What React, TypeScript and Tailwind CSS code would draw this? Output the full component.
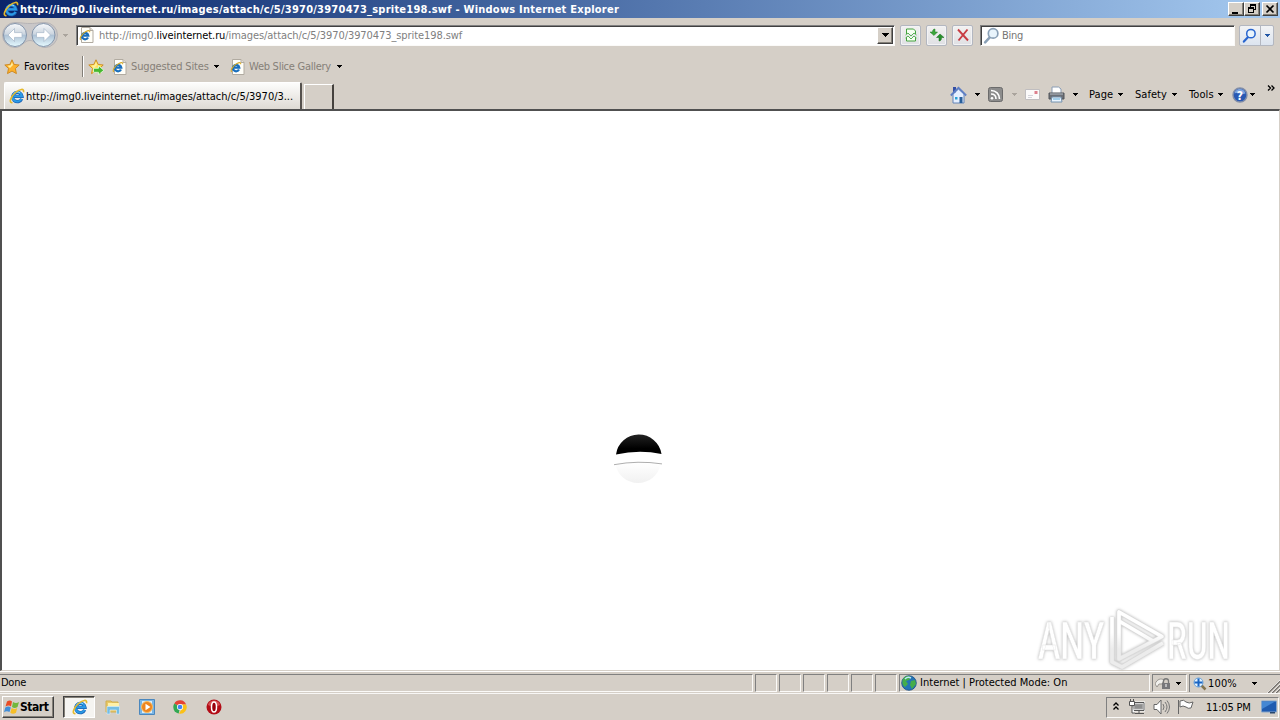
import type { ReactNode } from "react";

type IconProps = { className?: string };

function IeLogo({ className = "w-4 h-4" }: IconProps) {
  return (
    <svg viewBox="0 0 16 16" className={`shrink-0 ${className}`}>
      <path d="M12.700 10.800A4.700 4.700 0 1 1 13 8.300H5" fill="none" stroke="#1c62b4" strokeWidth="3.200" />
      <path d="M12.500 10.800A4.700 4.700 0 1 1 12.900 8.300H5" fill="none" stroke="#2b9be6" strokeWidth="2" />
      <path d="M4.500 6.200C5.500 4 8.500 3.200 11 4.800" fill="none" stroke="#8bdcff" strokeWidth="1" />
      <path
        d="M3.500 14.500C-.7 15.500 1.500 8.800 6.500 4.500 10.800.9 15.500 0 14.500 4.200"
        fill="none"
        stroke="#e5b92b"
        strokeWidth="1.600"
      />
    </svg>
  );
}

function IePage() {
  return (
    <svg viewBox="0 0 16 16" className="w-4 h-4 shrink-0">
      <path d="M2.500.5h8.500l3 3v12H2.500z" fill="#fffef8" stroke="#b1aba1" />
      <path d="M11 .5v3h3" fill="#e3dfd5" stroke="#b1aba1" />
      <path d="M9 10.500A3.200 3.200 0 1 1 9.300 8.600H4" fill="none" stroke="#1a6fbd" strokeWidth="2.200" />
      <path d="M1.800 12.800C-.2 12 3 6.500 7 4.500c2-1 4-1.500 3.700.8" fill="none" stroke="#d7aa25" strokeWidth="1.100" />
    </svg>
  );
}

function Star({ add }: { add?: boolean }) {
  return (
    <svg viewBox="0 0 16 16" className="w-4 h-4 shrink-0">
      <path
        d="m8 .8 2.100 4.600 5.100.6-3.800 3.500 1 5.100L8 12.100l-4.500 2.500 1-5.100L.8 6l5.100-.6z"
        fill={add ? "#ffe45c" : "#fdb12c"}
        stroke="#cc8418"
        strokeWidth=".9"
      />
      <path d="m8 3-1.300 3.300-3.200.4L6 9l3-3z" fill="#fff0a0" />
      {add && (
        <path d="M5.500 9.300h5V6.800l5.300 4.500-5.300 4.500v-2.500h-5z" fill="#46b830" stroke="#e9ffe0" strokeWidth=".8" />
      )}
    </svg>
  );
}

function Caret({ className = "text-black" }: IconProps) {
  return (
    <svg viewBox="0 0 5 3" shapeRendering="crispEdges" className={`w-[5px] h-[3px] shrink-0 ${className}`}>
      <path d="M0 0h5v1H0zM1 1h3v1H1zM2 2h1v1H2z" fill="currentColor" />
    </svg>
  );
}

function NavButtons() {
  return (
    <svg viewBox="0 0 58 28" className="w-[58px] h-7 shrink-0">
      <defs>
        <linearGradient id="nav" x2="0" y2="1">
          <stop offset="0" stopColor="#f7f9fb" />
          <stop offset=".45" stopColor="#cdd6e0" />
          <stop offset=".52" stopColor="#afc3d6" />
          <stop offset="1" stopColor="#e6faff" />
        </linearGradient>
      </defs>
      <path d="M14 1.500c6 0 8 1 15 1s9-1 15-1a12.500 12.500 0 0 1 0 25c-7 0-9-7-15-7s-8 7-15 7a12.500 12.500 0 0 1 0-25" fill="#c9c7c8" stroke="#b5b3b6" />
      <circle cx="14" cy="14" r="11.500" fill="url(#nav)" stroke="#8495ab" />
      <circle cx="42.500" cy="14" r="11.500" fill="url(#nav)" stroke="#8495ab" />
      <path d="M7 14l6.500-6.500v4.100H21v4.800h-7.500v4.100z" fill="#fff" stroke="#a5b6c8" strokeWidth=".7" />
      <path d="M49.500 14 43 7.500v4.100h-7.500v4.800H43v4.100z" fill="#fff" stroke="#a5b6c8" strokeWidth=".7" />
    </svg>
  );
}

function Magnifier({ color, className }: { color: string; className: string }) {
  return (
    <svg viewBox="0 0 16 16" className={`shrink-0 ${className}`}>
      <path d="m7 9-5 5.500" stroke={color} strokeWidth="2.300" strokeLinecap="round" />
      <circle cx="9.500" cy="6" r="4.500" fill="#e9f4fc" stroke={color} strokeWidth="1.600" />
    </svg>
  );
}

function CaptionButton({ children, className = "" }: { children: ReactNode; className?: string }) {
  return (
    <div
      className={`w-4 h-[14px] bg-[#d5cfc7] border border-t-white border-l-white border-r-[#404040] border-b-[#404040] shadow-[inset_-1px_-1px_#848078] ${className}`}
    >
      <svg viewBox="0 0 14 12" shapeRendering="crispEdges" className="w-[14px] h-3">
        {children}
      </svg>
    </div>
  );
}

function TitleBar() {
  return (
    <div className="h-[18px] flex items-center pl-[3px] pr-[2px] bg-linear-to-r from-[#0a246a] to-[#a6caf0] text-white font-bold">
      <IeLogo />
      <span className="ml-px mt-px w-[700px] tracking-[0.240px]">
        http://img0.liveinternet.ru/images/attach/c/5/3970/3970473_sprite198.swf - Windows Internet Explorer
      </span>
      <CaptionButton className="ml-auto">
        <path d="M3 9h6v2H3z" />
      </CaptionButton>
      <CaptionButton>
        <path d="M5 1h6v2H5zM5 3h1v1H5zM10 3h1v4h-1zM9 6h1v1H9zM3 4h6v2H3zM3 6h1v4H3zM8 6h1v4H8zM3 9h6v1H3z" />
      </CaptionButton>
      <CaptionButton className="ml-[2px]">
        <path d="m3.500 2.500 7 7m0-7-7 7" stroke="#000" strokeWidth="1.700" shapeRendering="auto" />
      </CaptionButton>
    </div>
  );
}

function ToolButton({ children }: { children: ReactNode }) {
  return (
    <div className="w-[21px] h-[21px] flex items-center justify-center rounded-xs border border-[#b3b7c0] bg-linear-to-b from-[#f2f1f0] to-[#dfe0e4] shadow-[inset_0_0_0_1px_#f3f3f5]">
      <svg viewBox="0 0 16 16" className="w-4 h-4 shrink-0">
        {children}
      </svg>
    </div>
  );
}

const sunken = "border border-t-[#808080] border-l-[#808080] border-r-[#fbfaf8] border-b-[#fbfaf8]";

function AddressRow() {
  return (
    <div className="h-[34px] flex items-center pl-px">
      <NavButtons />
      <Caret className="text-[#aaa49d] ml-1" />
      <div className={`ml-2 w-[819px] h-[21px] flex items-center bg-white pl-[2px] shadow-[inset_1px_1px_#404040] ${sunken}`}>
        <IePage />
        <span className="ml-1 mt-[2px] text-[#808080] tracking-[-0.080px]">
          http://img0.<span className="text-black">liveinternet.ru</span>/images/attach/c/5/3970/3970473_sprite198.swf
        </span>
        <div className="ml-auto w-4 h-[17px] mr-px flex items-center justify-center bg-[#d5cfc7] border border-t-white border-l-white border-r-[#404040] border-b-[#404040] shadow-[inset_-1px_-1px_#848078]">
          <svg viewBox="0 0 7 4" shapeRendering="crispEdges" className="w-[7px] h-1">
            <path d="M0 0h7v1H0zM1 1h5v1H1zM2 2h3v1H2zM3 3h1v1H3z" />
          </svg>
        </div>
      </div>
      <div className="flex gap-[5px] ml-[5px]">
        <ToolButton>
          <path d="M3.500 7V2h7l2 2v3M3.500 10v4h9v-4" fill="#f5fff0" stroke="#43a23f" />
          <path d="m2.500 8 2.500-2 3 3 3-3 2.500 2M2.500 11 5 9l3 3 3-3 2.500 2" fill="none" stroke="#58b356" />
        </ToolButton>
        <ToolButton>
          <path d="M6 2C4 2 3.500 3.500 3.500 5H1l4 3.500L8.500 5H6z" fill="#3ca63b" stroke="#227d25" strokeWidth=".5" />
          <path d="M10 14c2 0 2.500-1.500 2.500-3.500H15L11 7l-3.500 3.500H10z" fill="#278f2b" stroke="#176c1d" strokeWidth=".5" />
        </ToolButton>
        <ToolButton>
          <path d="m3 2.500 10 11M12.500 2.500l-9 11" stroke="#c83c43" strokeWidth="1.900" />
        </ToolButton>
      </div>
      <div className={`ml-[7px] w-[255px] h-[21px] flex items-center bg-white pl-[2px] shadow-[inset_1px_1px_#404040] ${sunken}`}>
        <Magnifier color="#8aa0b6" className="w-[17px] h-[17px]" />
        <span className="ml-[2px] mt-[2px] text-[#757575] tracking-[-0.250px]">Bing</span>
      </div>
      <div className="ml-[4px] w-[35px] h-[21px] flex items-center rounded-xs border border-[#b3b7c0] bg-linear-to-b from-[#f2f3f5] to-[#dce4ef]">
        <Magnifier color="#2865cf" className="w-[15px] h-[15px] ml-[2px]" />
        <div className="ml-[3px] h-full border-l border-[#b3b7c0] pl-[4px] flex items-center">
          <Caret className="text-[#2156a5]" />
        </div>
      </div>
    </div>
  );
}

function FavoritesRow() {
  return (
    <div className="h-[29px] flex items-center pl-1">
      <Star />
      <span className="ml-1 w-[58px] tracking-[0.080px]">Favorites</span>
      <div className="w-[2px] h-[21px] border-l border-[#827e77] border-r border-r-white" />
      <div className="ml-1">
        <Star add />
      </div>
      <div className="ml-2 flex items-center text-[#858078]">
        <IePage />
        <span className="ml-[3px] mt-px w-[83px] tracking-[-0.140px]">Suggested Sites</span>
        <Caret />
        <div className="ml-[11px]">
          <IePage />
        </div>
        <span className="ml-[3px] mt-px w-[88px] tracking-[-0.260px]">Web Slice Gallery</span>
        <Caret />
      </div>
    </div>
  );
}

function CommandBar() {
  return (
    <div className="ml-auto mt-[4px] h-[19px] flex items-center pr-1">
      <svg viewBox="0 0 18 18" className="w-[18px] h-[18px]">
        <path d="M3 8v9h11V8L8.500 3z" fill="#e5efff" stroke="#6384b8" />
        <path d="M3 1h3v5L3 8z" fill="#344fa5" />
        <path d="m.8 9.500 7.700-7.700 7.700 7.700" fill="none" stroke="#5f7fc4" strokeWidth="1.800" />
        <path d="M9.500 11h3v6h-3z" fill="#285f9b" />
        <path d="M5 11h2.500v2.500H5z" fill="#29a2d5" />
      </svg>
      <Caret className="ml-[7px]" />
      <svg viewBox="0 0 15 15" className="w-[15px] h-[15px] ml-2">
        <rect x=".5" y=".5" width="14" height="14" rx="2" fill="#8c8c8c" stroke="#6b6b6b" />
        <path d="M3 3.500c5 0 8.500 3.500 8.500 8.500M3 7c3 0 5 2 5 5" fill="none" stroke="#fff" strokeWidth="1.600" />
        <circle cx="4" cy="11.300" r="1.300" fill="#fff" />
      </svg>
      <Caret className="text-[#aaa49d] ml-[9px]" />
      <svg viewBox="0 0 15 11" className="w-[15px] h-[11px] ml-2">
        <path d="M.5.500h14v10H.5z" fill="#fbfafa" stroke="#c0bec0" />
        <path d="M9.500 2h3v3h-3z" fill="#dc7f8d" />
        <path d="M3 6.500h5M3 8.500h4" stroke="#d4d4db" />
      </svg>
      <svg viewBox="0 0 17 17" className="w-[17px] h-[17px] ml-2">
        <path d="M4 7V1h6.500L13 3v4" fill="#fff" stroke="#899cb4" />
        <path d="M1 7h15v6H1z" fill="#6c7077" stroke="#50545a" />
        <path d="M2 8h13" stroke="#b5bcc5" />
        <path d="M4 11h9l1 5H3z" fill="#eaf5ff" stroke="#7592ae" />
        <path d="M5 13h7" stroke="#5aa9d7" />
      </svg>
      <Caret className="ml-2" />
      <span className="ml-[11px] w-[29px] tracking-[0.050px]">Page</span>
      <Caret />
      <span className="ml-3 w-[37px] tracking-[0.050px]">Safety</span>
      <Caret />
      <span className="ml-3 w-[29px] tracking-[0.100px]">Tools</span>
      <Caret />
      <svg viewBox="0 0 16 16" className="w-4 h-4 ml-[9px]">
        <circle cx="8" cy="8" r="7" fill="#2959b3" stroke="#808da8" strokeWidth="1.400" />
        <path d="M2.500 6.500C3 1 12 0 13.500 6.500 10 8 7 5 2.500 6.500" fill="#7fa5df" />
        <text x="8" y="12.500" textAnchor="middle" fontSize="12" fontWeight="bold" fill="#fff">?</text>
      </svg>
      <Caret className="ml-[2px]" />
      <svg viewBox="0 0 8 6" className="w-2 h-[6px] ml-3 mr-px -mt-[14px]">
        <path d="m1 .5 2.500 2.500L1 5.500M4.500.5 7 3 4.500 5.500" fill="none" stroke="#000" strokeWidth="1.300" />
      </svg>
    </div>
  );
}

function TabRow() {
  return (
    <div className="h-7 flex items-start pl-1">
      <div className="mt-px w-[298px] h-[27px] flex items-center pl-[4px] bg-linear-to-b from-[#fdfdfc] to-[#dedad4] border-t border-l border-white border-r-2 border-r-[#55514d] rounded-t-xs">
        <IeLogo />
        <span className="ml-px mt-px tracking-[-0.030px]">http://img0.liveinternet.ru/images/attach/c/5/3970/3...</span>
      </div>
      <div className="ml-[2px] mt-[3px] w-[30px] h-[25px] border-t border-l border-white border-r-2 border-r-[#45413d]" />
      <CommandBar />
    </div>
  );
}

function Ball() {
  return (
    <svg viewBox="0 0 50 54" className="w-[50px] h-[54px]">
      <defs>
        <linearGradient id="cap" x2="0" y2="1">
          <stop offset="0" stopColor="#222" />
          <stop offset=".7" stopColor="#000" />
        </linearGradient>
        <linearGradient id="base" x2="0" y2="1">
          <stop offset="0" stopColor="#fff" />
          <stop offset="1" stopColor="#f1f1f1" />
        </linearGradient>
      </defs>
      <path d="M2 23.500A23 23 0 0 1 47.500 23Q25 18.500 2 23.500" fill="url(#cap)" />
      <path d="M2 34q22-4.500 44 0c-1 10-11 18-22 18S3 44 2 34" fill="url(#base)" />
      <path d="M0 33.700q24-4.500 48-.8" fill="none" stroke="#999" strokeWidth=".8" />
    </svg>
  );
}

// Translucent product mark lying over the page and the status bar
function Watermark() {
  return (
    <svg
      viewBox="0 0 240 66"
      className="absolute left-[1036px] top-[606px] w-[240px] h-[66px] drop-shadow-[0_0_1.500px_#b4b4b4]"
    >
      <defs>
        <linearGradient id="mark" gradientUnits="userSpaceOnUse" x1="0" y1="8" x2="0" y2="62">
          <stop offset=".35" stopColor="#fff" />
          <stop offset=".65" stopColor="#ececec" />
        </linearGradient>
      </defs>
      <g
        fill="url(#mark)"
        stroke="#e6e6e6"
        strokeWidth=".5"
        fontFamily="Roboto, sans-serif"
        fontSize="51"
        fontWeight="500"
      >
        <text transform="translate(2 53) scale(.66 1)">ANY</text>
        <text transform="translate(131 53) scale(.62 1)">RUN</text>
      </g>
      <g fill="none" strokeLinejoin="round">
        <path d="M83 6v47l43-22.500zM83 15l34 20M76 11v45l10 5 41-24" stroke="#dcdcdc" strokeWidth="4.800" />
        <path d="M83 6v47l43-22.500zM83 15l34 20M76 11v45l10 5 41-24" stroke="url(#mark)" strokeWidth="3.600" />
      </g>
    </svg>
  );
}

function StatusBar() {
  return (
    <div className="h-[23px] flex items-start pt-[2px] border-t border-white border-b border-b-[#f8f7f5] gap-[2px]">
      <div className={`w-[753px] h-[18px] flex items-center ${sunken} border-l-0 pl-px`}>
        <span className="tracking-[-0.250px]">Done</span>
      </div>
      {[0, 1, 2, 3, 4, 5].map((n) => (
        <div key={n} className={`w-[22px] h-[18px] ${sunken}`} />
      ))}
      <div className={`w-[251px] h-[18px] flex items-center pl-px ${sunken}`}>
        <svg viewBox="0 0 16 16" className="w-4 h-4">
          <circle cx="8" cy="8" r="7.300" fill="#2474b5" stroke="#1a4e87" strokeWidth=".8" />
          <path d="M2 4c3-4 6-3 8-2L8 5 5 6l2 3-3 3C1 10 1 7 2 4M10 6l4-1 1 4-4 5-2-4z" fill="#45ad4a" />
          <path d="M4 4c2-2 4-2 6-1" stroke="#bce9fb" strokeWidth="1.500" fill="none" />
        </svg>
        <span className="ml-[3px] tracking-[0.020px]">Internet | Protected Mode: On</span>
      </div>
      <div className={`w-[35px] h-[18px] flex items-center pl-[2px] ${sunken}`}>
        <svg viewBox="0 0 16 16" className="w-4 h-4">
          <path d="M0 9c2-5 6-6 9-4L7 9H4l-2 3z" fill="#f1f0ed" stroke="#99958f" />
          <path d="M8.500 8V6c0-3 5-3 5 0v2" fill="none" stroke="#777" strokeWidth="1.300" />
          <path d="M7 8h8v6H7z" fill="#77777a" />
          <path d="M11 9v3" stroke="#fff" />
        </svg>
        <Caret className="ml-[5px]" />
      </div>
      <div className="w-[91px] h-[18px] flex items-center border-t border-l border-[#808080] pl-1">
        <svg viewBox="0 0 14 14" className="w-[14px] h-[14px] -ml-px">
          <path d="m8 8 4.500 4.500" stroke="#857551" strokeWidth="2.500" />
          <circle cx="5.500" cy="5.500" r="4.500" fill="#e3f2ff" stroke="#68a2d9" />
          <path d="M5.500 1.500v8m-4-4h8" stroke="#1a65c3" strokeWidth="2" />
        </svg>
        <span className="ml-px w-[44px] tracking-[0.150px]">100%</span>
        <Caret />
        <svg viewBox="0 0 13 13" className="w-[13px] h-[13px] ml-auto mt-[5px]">
          <path d="M1 13 13 1M5 13l8-8M9 13l4-4" stroke="#77736e" strokeWidth="1.600" />
          <path d="M0 13 13 0M4 13l9-9M8 13l5-5" stroke="#fff" strokeWidth=".7" />
        </svg>
      </div>
    </div>
  );
}

function WindowsFlag() {
  return (
    <svg viewBox="0 0 16 16" className="w-4 h-4 shrink-0">
      <path d="M3 2.500q3-2 5 0L7 7.500q-2-2-5.500 0z" fill="#e94c25" />
      <path d="M9 3q3 2 6 0L13.500 8q-3 2-5.500 0z" fill="#72b73b" />
      <path d="M1.300 8.500q3-2 5.500 0L5.500 13q-3-1.500-5.500.3z" fill="#428ed8" />
      <path d="M7.700 9q3 2 5.500 0L12 13.700q-3 2-5.700 0z" fill="#f6be27" />
    </svg>
  );
}

function Tray() {
  return (
    <div className={`ml-auto w-[173px] h-[21px] flex items-center pl-[6px] ${sunken}`}>
      <svg viewBox="0 0 6 8" className="w-[6px] h-2 -mt-[2px]">
        <path d="m.5 3.500 2.500-2.500 2.500 2.500M.5 7.500 3 5l2.500 2.500" fill="none" stroke="#000" strokeWidth="1.300" />
      </svg>
      <svg viewBox="0 0 16 16" className="w-4 h-4 ml-[10px]">
        <path d="M4 3.500h11v8H4z" fill="#a5a5a5" stroke="#fff" strokeWidth="2" />
        <path d="M4 3.500h11v8H4zM10 12v3M6 14.500h9" fill="none" stroke="#555" />
        <path d="M6 5.500h7v4H6z" fill="#8f8f8f" />
        <path d="M.5 2.500h5v4h-5zM3 7v7h3" fill="#fff" stroke="#555" />
        <path d="M1.500 0v2M4.500 0v2" stroke="#555" />
      </svg>
      <svg viewBox="0 0 17 16" className="w-[17px] h-4 ml-2">
        <path d="M1 5.500h3L8 1v14l-4-4.500H1z" fill="#fff" stroke="#666" />
        <path d="M10 5q2 3 0 6M12 3q4 5 0 10M14 1.500q5 6.500 0 13" fill="none" stroke="#777" />
      </svg>
      <svg viewBox="0 0 17 16" className="w-[17px] h-4 ml-[7px]">
        <path d="M1.500 1v14M3 2q4-2 6 1 3 2 7 0l-2 6q-3 1-5-1-3-2-6 0z" fill="#fff" stroke="#666" />
      </svg>
      <span className="ml-[12px] mt-px w-[47px] tracking-[-0.200px]">11:05 PM</span>
      <svg viewBox="0 0 16 14" className="w-4 h-[14px] ml-2">
        <path d="M.5 1h15v11H.5z" fill="#1f5bb0" stroke="#86a5ca" />
        <path d="M1 9 14 1.500H1z" fill="#4487d4" />
        <path d="M9 12h5v1.500H9z" fill="#29476d" />
      </svg>
    </div>
  );
}

function Taskbar() {
  return (
    <div className="h-[26px] flex items-center pl-[2px] pr-px">
      <div className="w-[52px] h-[22px] flex items-center pl-px font-bold text-[12px] border border-t-white border-l-white border-r-[#404040] border-b-[#404040] shadow-[inset_-1px_-1px_#848078]">
        <WindowsFlag />
        <span className="tracking-[-0.450px]">Start</span>
      </div>
      <div className="ml-[9px] w-8 h-[22px] flex items-center justify-center bg-[#f5f4f1] border border-t-[#404040] border-l-[#404040] border-r-white border-b-white shadow-[inset_1px_1px_#848078]">
        <IeLogo className="w-4 h-4 ml-[2px]" />
      </div>
      <svg viewBox="0 0 16 16" className="w-4 h-4 ml-[10px]">
        <path d="M1 2h5l1 1h6v10H1z" fill="#e9c865" stroke="#cfad50" />
        <path d="M3 4h11v7H3z" fill="#fff0a8" />
        <path d="M2 7.500h12.500V15h-3v-4H5v4H2z" fill="#74bde4" stroke="#d8efff" strokeWidth=".6" />
      </svg>
      <svg viewBox="0 0 16 16" className="w-4 h-4 ml-[18px]">
        <path d="M.5.500h15v15H.5z" fill="#79b5e5" stroke="#4b87bd" />
        <path d="M3 2h10v12H3z" fill="#d9ecfa" />
        <circle cx="8" cy="8" r="5.500" fill="#ef851e" stroke="#f8bd63" />
        <path d="m6.500 4.800 5 3.200-5 3.200z" fill="#fff" />
      </svg>
      <svg viewBox="0 0 16 16" className="w-[14px] h-[14px] ml-[18px]">
        <path d="M8 8 1.500 4A7.500 7.500 0 0 1 15 5H8z" fill="#e54335" />
        <path d="M8 8 6.500 15.400A7.500 7.500 0 0 1 1.500 4z" fill="#32a852" />
        <path d="M8 5h7A7.500 7.500 0 0 1 6.800 15.500L11 9z" fill="#fbc116" />
        <circle cx="8" cy="8" r="3.500" fill="#fff" />
        <circle cx="8" cy="8" r="2.700" fill="#4285f4" />
      </svg>
      <svg viewBox="0 0 16 16" className="w-4 h-4 ml-[19px]">
        <circle cx="8" cy="8" r="7.500" fill="#b30c16" />
        <path d="M2 6C3 0 13 0 14 6q-6 3-12 0" fill="#d75052" />
        <ellipse cx="8" cy="8" rx="2.500" ry="5" fill="#99000b" stroke="#fff" strokeWidth="1.500" />
      </svg>
      <Tray />
    </div>
  );
}

export default function App() {
  return (
    <div className="relative w-[1280px] h-[720px] flex flex-col overflow-hidden bg-[#d5cfc7] text-black text-[11px] leading-[14px] whitespace-nowrap font-['DejaVu_Sans_Condensed','DejaVu_Sans',sans-serif]">
      <TitleBar />
      <AddressRow />
      <FavoritesRow />
      <TabRow />
      <div className="h-[562px] bg-white border-t-2 border-l-2 border-[#505050] border-r border-r-[#d5cfc7] border-b border-b-[#d5cfc7] flex justify-center pt-[320px] pr-[3px]">
        <Ball />
      </div>
      <StatusBar />
      <Taskbar />
      <Watermark />
    </div>
  );
}
